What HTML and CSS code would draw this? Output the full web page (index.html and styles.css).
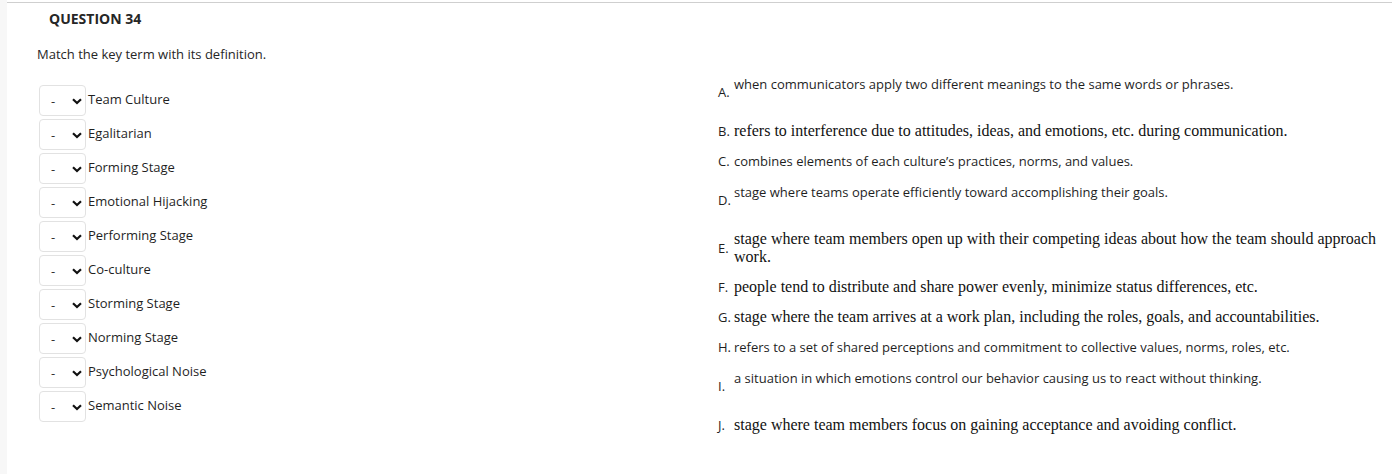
FILE: index.html
```html
<!DOCTYPE html>
<html>
<head>
<meta charset="utf-8">
<link rel="stylesheet" href="styles.css">
</head>
<body>
<div class="page">
  <div class="strip"></div>
  <div class="main">
    <h2 class="qtitle">QUESTION 34</h2>
    <p class="intro">Match the key term with its definition.</p>
    <div class="match">
      <div class="terms">
        <div class="term"><div class="sel"><span class="dash">-</span><svg class="chev" width="10" height="7" viewBox="0 0 10 7"><path d="M1 1.2 L5 5 L9 1.2" fill="none" stroke="#111" stroke-width="2.2"/></svg></div><span class="tlabel">Team Culture</span></div>
        <div class="term"><div class="sel"><span class="dash">-</span><svg class="chev" width="10" height="7" viewBox="0 0 10 7"><path d="M1 1.2 L5 5 L9 1.2" fill="none" stroke="#111" stroke-width="2.2"/></svg></div><span class="tlabel">Egalitarian</span></div>
        <div class="term"><div class="sel"><span class="dash">-</span><svg class="chev" width="10" height="7" viewBox="0 0 10 7"><path d="M1 1.2 L5 5 L9 1.2" fill="none" stroke="#111" stroke-width="2.2"/></svg></div><span class="tlabel">Forming Stage</span></div>
        <div class="term"><div class="sel"><span class="dash">-</span><svg class="chev" width="10" height="7" viewBox="0 0 10 7"><path d="M1 1.2 L5 5 L9 1.2" fill="none" stroke="#111" stroke-width="2.2"/></svg></div><span class="tlabel">Emotional Hijacking</span></div>
        <div class="term"><div class="sel"><span class="dash">-</span><svg class="chev" width="10" height="7" viewBox="0 0 10 7"><path d="M1 1.2 L5 5 L9 1.2" fill="none" stroke="#111" stroke-width="2.2"/></svg></div><span class="tlabel">Performing Stage</span></div>
        <div class="term"><div class="sel"><span class="dash">-</span><svg class="chev" width="10" height="7" viewBox="0 0 10 7"><path d="M1 1.2 L5 5 L9 1.2" fill="none" stroke="#111" stroke-width="2.2"/></svg></div><span class="tlabel">Co-culture</span></div>
        <div class="term"><div class="sel"><span class="dash">-</span><svg class="chev" width="10" height="7" viewBox="0 0 10 7"><path d="M1 1.2 L5 5 L9 1.2" fill="none" stroke="#111" stroke-width="2.2"/></svg></div><span class="tlabel">Storming Stage</span></div>
        <div class="term"><div class="sel"><span class="dash">-</span><svg class="chev" width="10" height="7" viewBox="0 0 10 7"><path d="M1 1.2 L5 5 L9 1.2" fill="none" stroke="#111" stroke-width="2.2"/></svg></div><span class="tlabel">Norming Stage</span></div>
        <div class="term"><div class="sel"><span class="dash">-</span><svg class="chev" width="10" height="7" viewBox="0 0 10 7"><path d="M1 1.2 L5 5 L9 1.2" fill="none" stroke="#111" stroke-width="2.2"/></svg></div><span class="tlabel">Psychological Noise</span></div>
        <div class="term"><div class="sel"><span class="dash">-</span><svg class="chev" width="10" height="7" viewBox="0 0 10 7"><path d="M1 1.2 L5 5 L9 1.2" fill="none" stroke="#111" stroke-width="2.2"/></svg></div><span class="tlabel">Semantic Noise</span></div>
      </div>
      <div class="defs">
        <div class="def tall"><span class="letter">A.</span><div class="dtext sans">when communicators apply two different meanings to the same words or phrases.</div></div>
        <div class="def"><span class="letter">B.</span><div class="dtext serif">refers to interference due to attitudes, ideas, and emotions, etc. during communication.</div></div>
        <div class="def"><span class="letter">C.</span><div class="dtext sans">combines elements of each culture’s practices, norms, and values.</div></div>
        <div class="def tall"><span class="letter">D.</span><div class="dtext sans">stage where teams operate efficiently toward accomplishing their goals.</div></div>
        <div class="def two"><span class="letter">E.</span><div class="dtext serif">stage where team members open up with their competing ideas about how the team should approach work.</div></div>
        <div class="def"><span class="letter">F.</span><div class="dtext serif">people tend to distribute and share power evenly, minimize status differences, etc.</div></div>
        <div class="def"><span class="letter">G.</span><div class="dtext serif">stage where the team arrives at a work plan, including the roles, goals, and accountabilities.</div></div>
        <div class="def"><span class="letter">H.</span><div class="dtext sans">refers to a set of shared perceptions and commitment to collective values, norms, roles, etc.</div></div>
        <div class="def tall"><span class="letter">I.</span><div class="dtext sans">a situation in which emotions control our behavior causing us to react without thinking.</div></div>
        <div class="def"><span class="letter">J.</span><div class="dtext serif">stage where team members focus on gaining acceptance and avoiding conflict.</div></div>
      </div>
    </div>
  </div>
</div>
</body>
</html>
```
FILE: styles.css
```css
html, body {
  margin: 0;
  padding: 0;
  background: #ffffff;
}
body {
  font-family: "Open Sans", "Liberation Sans", sans-serif;
  font-size: 13px;
  color: #1f1f1f;
}
.page {
  display: flex;
  width: 1392px;
  height: 474px;
  overflow: hidden;
}
.strip {
  width: 7px;
  flex: none;
  background: #f7f7f7;
}
.main {
  flex: 1;
  margin-top: 2px;
  border-top: 1px solid #cfcfcf;
}
.qtitle {
  margin: 0;
  padding: 6px 0 0 42px;
  font-size: 14px;
  font-weight: 700;
  line-height: 19px;
  color: #262626;
}
.intro {
  margin: 0;
  padding: 17px 0 0 30px;
  line-height: 18px;
  color: #262626;
}
.match {
  display: flex;
  align-items: flex-start;
  padding-top: 5px;
}
.terms {
  display: flex;
  flex-direction: column;
  gap: 3px;
  margin-left: 32px;
  padding-top: 17px;
  width: 679px;
}
.term {
  display: flex;
  align-items: center;
  height: 31px;
}
.sel {
  box-sizing: border-box;
  width: 47px;
  height: 31px;
  border: 1px solid #e2e2e2;
  border-radius: 4px;
  display: flex;
  align-items: center;
  padding-left: 11px;
  background: #fff;
}
.dash {
  color: #333;
  width: 21px;
  font-size: 13px;
}
.chev {
  display: block;
  margin-top: 1px;
}
.tlabel {
  margin-left: 2px;
  margin-top: -3px;
  color: #1f1f1f;
}
.defs {
  display: flex;
  flex-direction: column;
  width: 666px;
}
.def {
  display: flex;
  align-items: center;
  box-sizing: border-box;
  height: 30px;
}
.def.tall {
  height: 48px;
}
.def.tall .dtext {
  padding-bottom: 16px;
}
.def.two {
  height: 48px;
}
.letter {
  width: 16px;
  flex: none;
  color: #1f1f1f;
  line-height: 18px;
}
.dtext {
  width: 650px;
  line-height: 18px;
}
.sans {
  font-family: "Open Sans", "Liberation Sans", sans-serif;
  font-size: 13px;
  color: #1f1f1f;
}
.serif {
  font-family: "Liberation Serif", "Times New Roman", serif;
  font-size: 16px;
  color: #111;
}
```
